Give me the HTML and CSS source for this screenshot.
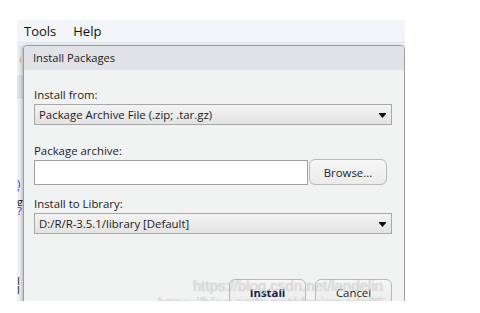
FILE: index.html
```html
<!DOCTYPE html>
<html lang="en">
<head>
    <meta charset="UTF-8">
    <title>Install Packages</title>
    <link rel="stylesheet" href="styles.css">
</head>
<body>
    <div class="app">
        <div class="menubar">
            <span class="menu-item">Tools</span>
            <span class="menu-item">Help</span>
        </div>
        <div class="workspace">
            <div class="side">
                <div class="side-top"><span class="side-arrow">&#8595;</span></div>
                <div class="side-box"></div>
                <div class="side-text">
                    <span class="blue">)</span>
                    <span class="blue">'</span>
                    <span>g</span>
                    <span class="blue link">?</span>
                    <span class="gap">I</span>
                    <span>l</span>
                </div>
            </div>
            <div class="dialog">
                <div class="dialog-title">Install Packages</div>
                <div class="dialog-body">
                    <label class="field-label">Install from:</label>
                    <div class="select">
                        <span>Package Archive File (.zip; .tar.gz)</span>
                        <svg class="arrow" width="7" height="5" viewBox="0 0 7 5"><rect x="0" y="0" width="7" height="1" fill="#111"/><path d="M0 1 L7 1 L3.5 5 Z" fill="#111"/></svg>
                    </div>
                    <label class="field-label">Package archive:</label>
                    <div class="file-row">
                        <div class="text-input"></div>
                        <button class="btn browse">Browse...</button>
                    </div>
                    <label class="field-label">Install to Library:</label>
                    <div class="select">
                        <span>D:/R/R-3.5.1/library [Default]</span>
                        <svg class="arrow" width="7" height="5" viewBox="0 0 7 5"><rect x="0" y="0" width="7" height="1" fill="#111"/><path d="M0 1 L7 1 L3.5 5 Z" fill="#111"/></svg>
                    </div>
                    <div class="actions">
                        <button class="btn install">Install</button>
                        <button class="btn">Cancel</button>
                    </div>
                </div>
            </div>
        </div>
        <div class="watermark">
            <div>https://blog.csdn.net/landelin</div>
            <div class="wm-second">https://blog.csdn.net/dexingyulo25</div>
        </div>
    </div>
</body>
</html>
```

FILE: styles.css
```css
body {
    margin: 0;
    background: #fff;
    font-family: "Open Sans", "Noto Sans", sans-serif;
    color: #1c1c1c;
}
.app {
    position: relative;
    margin: 20px 0 0 17px;
    width: 388px;
    height: 281px;
    overflow: hidden;
    background: #f0f2f5;
}
.menubar {
    height: 22px;
    background: #f3f5f8;
    border-bottom: 1px solid #dce6f2;
    display: flex;
    gap: 17px;
    padding-left: 7px;
    font-size: 13px;
    line-height: 22px;
    color: #111;
}
.workspace {
    display: flex;
    margin-top: 2px;
}
.side {
    width: 6px;
    overflow: hidden;
    flex-shrink: 0;
}
.side-top {
    height: 27px;
    background: #eceef2;
    font-size: 10px;
    line-height: 27px;
}
.side-arrow {
    color: #d08a2a;
    margin-left: 1px;
}
.side-box {
    height: 22px;
    margin-top: 3px;
    background: #dfe3e8;
    border-bottom: 1px solid #cfd4da;
}
.side-text {
    display: flex;
    flex-direction: column;
    padding-top: 81px;
    font-size: 11px;
    line-height: 9px;
    white-space: nowrap;
}
.side-text span {
    display: block;
    height: 9px;
    overflow: hidden;
}
.side-text .gap {
    margin-top: 61px;
}
.blue {
    color: #2a2ae0;
}
.link {
    text-decoration: underline;
}
.dialog {
    width: 382px;
    height: 300px;
    box-sizing: border-box;
    border: 1px solid #9c9c9c;
    border-radius: 4px 4px 0 0;
    background: #f1f2f2;
    box-shadow: -2px 0 3px rgba(0, 0, 0, 0.18);
}
.dialog-title {
    height: 24px;
    background: #e1e2e6;
    font-size: 11.2px;
    line-height: 24px;
    padding-left: 9px;
    border-radius: 3px 3px 0 0;
}
.dialog-body {
    padding: 15px 12px 0 10px;
    font-size: 11.4px;
}
.field-label {
    display: block;
    height: 19px;
    line-height: 19px;
}
.select {
    height: 21px;
    box-sizing: border-box;
    border: 1px solid #a8a8a8;
    background: linear-gradient(#f3f3f3, #e3e3e3);
    display: flex;
    align-items: center;
    justify-content: space-between;
    padding: 0 5px 0 4px;
    margin-bottom: 16px;
}
.arrow {
    margin-top: 1px;
}
.file-row {
    display: flex;
    align-items: flex-end;
    margin-top: -1px;
    margin-bottom: 9px;
}
.text-input {
    width: 274px;
    height: 25px;
    box-sizing: border-box;
    border: 1px solid #a0a0a0;
    background: #fff;
}
.btn {
    font-family: inherit;
    font-size: 11.4px;
    color: #1c1c1c;
    height: 26px;
    border: 1px solid #b8b8b8;
    border-radius: 6px;
    background: linear-gradient(#f6f6f6, #ebebeb);
    padding: 0;
}
.browse {
    width: 78px;
    margin-left: 1px;
}
.actions {
    display: flex;
    justify-content: flex-end;
    gap: 9px;
    margin-top: 45px;
}
.actions .btn {
    width: 77px;
}
.install {
    font-weight: bold;
    color: #10204a;
}
.watermark {
    position: absolute;
    left: 176px;
    top: 257px;
    font-family: "Liberation Sans", sans-serif;
    font-size: 15px;
    line-height: 17px;
    color: rgba(255, 255, 255, 0.55);
    text-shadow: 0 0 1px rgba(120, 120, 120, 0.6);
    white-space: nowrap;
    pointer-events: none;
}
.wm-second {
    margin-left: -35px;
}
```
